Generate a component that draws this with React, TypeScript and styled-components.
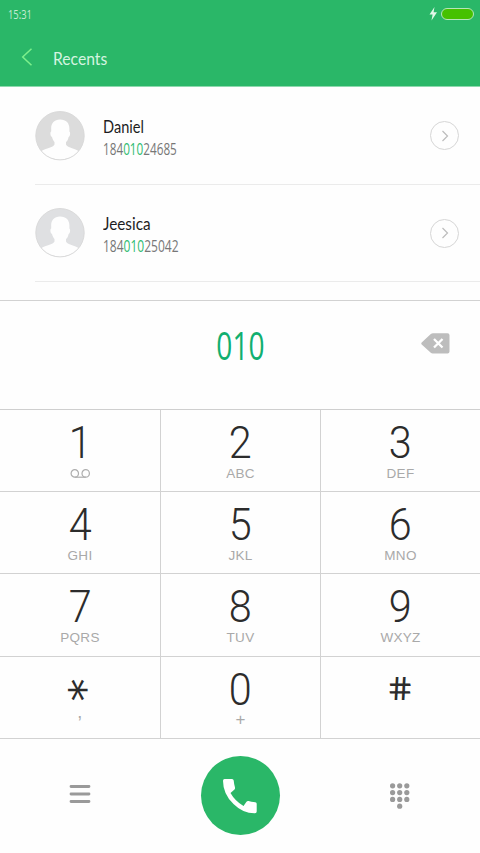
import React from "react";
import styled, { createGlobalStyle } from "styled-components";

const Global = createGlobalStyle`
  * { box-sizing: border-box; }
  html, body { margin: 0; padding: 0; background: #fff; }
  body { font-family: Lato, "Open Sans", sans-serif; overflow: hidden; }
  button { border: 0; padding: 0; margin: 0; background: none; font: inherit; color: inherit; }
  svg { display: block; }
`;

const Screen = styled.div`
  width: 480px;
  height: 853px;
  display: flex;
  flex-direction: column;
  background: #fefefe;
`;

const Header = styled.header`
  height: 87px;
  flex: none;
  background: #2ab768;
  border-bottom: 1px solid #8dd9ae;
`;

const StatusBar = styled.div`
  height: 28px;
  display: flex;
  align-items: center;
  justify-content: space-between;
  padding: 0 6px 0 8px;
`;

const Narrow = styled.span<{ $size: number; $x: number; $color: string; $weight?: number; $line: number; $origin?: string; $digits?: boolean }>`
  display: block;
  white-space: nowrap;
  font-family: ${(p) => (p.$digits ? '"Open Sans", sans-serif' : "Lato, sans-serif")};
  font-size: ${(p) => p.$size}px;
  line-height: ${(p) => p.$line}px;
  font-weight: ${(p) => p.$weight ?? 400};
  color: ${(p) => p.$color};
  transform: scaleX(${(p) => p.$x});
  transform-origin: ${(p) => p.$origin ?? "left"} center;
`;

const Battery = styled.div`
  display: flex;
  align-items: center;
  gap: 3px;
`;

const BatteryBody = styled.div`
  width: 33px;
  height: 12px;
  border: 1px solid #b5e5b8;
  border-radius: 6px;
  background: #46c100;
`;

const TitleBar = styled.div`
  display: flex;
  align-items: center;
  height: 58px;
  padding-left: 21px;
  gap: 20px;
`;

const TitleText = styled.div`
  padding-top: 2px;
`;

const List = styled.main`
  height: 214px;
  flex: none;
  border-bottom: 1px solid #d2d2d2;
`;

const Contact = styled.div<{ $height: number }>`
  height: ${(p) => p.$height}px;
  margin-left: 35px;
  padding-right: 21px;
  border-bottom: 1px solid #ebebeb;
  display: flex;
  align-items: center;
`;

const ContactText = styled.div`
  flex: 1;
  padding: 3px 0 0 18px;
`;

const Match = styled.span`
  color: #2dbb70;
`;

const Round = styled.button`
  width: 29px;
  height: 29px;
  border: 1px solid #d6d6d6;
  border-radius: 50%;
  display: flex;
  align-items: center;
  justify-content: center;
`;

const Display = styled.section`
  height: 108px;
  flex: none;
  display: grid;
  grid-template-columns: 160px 160px 160px;
  justify-items: center;
  padding-top: 20px;
`;

const Erase = styled.button`
  grid-column: 3;
  justify-self: end;
  align-self: start;
  margin: 12px 30px 0 0;
`;

const Typed = styled.div`
  grid-column: 2;
`;

const Pad = styled.section`
  flex: none;
  display: grid;
  grid-template-columns: 161px 160px 159px;
  grid-template-rows: 82px 82px 83px 82px;
  border-top: 1px solid #cfcfcf;
`;

const Key = styled.button`
  display: flex;
  flex-direction: column;
  align-items: center;
  border-bottom: 1px solid #d2d2d2;
  border-right: 1px solid #d2d2d2;
  &:nth-child(3n) { border-right: 0; }
`;

const Digit = styled.span`
  height: 54px;
  padding-top: 7px;
  font-family: Roboto, sans-serif;
  font-weight: 300;
  font-size: 44px;
  line-height: 52px;
  color: #2c2c2c;
  transform: scaleX(0.94);
`;

const Symbol = styled.span<{ $turn: string; $size: number }>`
  display: flex;
  align-items: center;
  justify-content: center;
  width: 52px;
  height: 52px;
  font-family: "DejaVu Sans", sans-serif;
  font-weight: 400;
  font-size: ${(p) => p.$size}px;
  line-height: 52px;
  transform: ${(p) => p.$turn};
`;

const Letters = styled.span<{ $size?: number; $lift?: number }>`
  height: 20px;
  font-family: "Liberation Sans", Arial, sans-serif;
  font-size: ${(p) => p.$size ?? 13.5}px;
  line-height: 20px;
  letter-spacing: 0.3px;
  color: #a9a9a9;
  display: flex;
  align-items: center;
  margin-top: ${(p) => -(p.$lift ?? 0)}px;
`;

const Actions = styled.footer`
  height: 114px;
  display: grid;
  grid-template-columns: 160px 160px 160px;
  align-items: start;
  justify-items: center;
`;

const MenuButton = styled.button`
  margin-top: 45px;
`;

const DialpadButton = styled.button`
  margin-top: 44px;
`;

const Call = styled.button`
  margin-top: 17px;
  width: 79px;
  height: 79px;
  padding-top: 2px;
  border-radius: 50%;
  background: #2ab768;
  display: flex;
  align-items: center;
  justify-content: center;
`;

const Avatar = ({ color, id }: { color: string; id: string }) => (
  <svg width="50" height="50" viewBox="0 0 50 50">
    <clipPath id={id}><circle cx="25" cy="24.7" r="24" /></clipPath>
    <circle cx="25" cy="24.7" r="24.3" fill="#fefefe" />
    <circle cx="25" cy="24.7" r="24.3" fill={color} />
    <path
      clipPath={`url(#${id})`}
      fill="#fefefe"
      d="M25 8.500C19 8.500 15.800 12.500 16.200 18V20.500C14.800 21 15.300 25.500 17 26C17.600 28.500 18.600 30 19.500 31V33.500C18.500 36.500 10 37.500 5.500 40.500L0 46V50H50V46L44.500 40.500C40 37.500 32 36.500 31 33.500V31C32.500 30 33 28.500 33.600 26C35.200 25.500 35.600 21 34.400 20.500V18C34.600 12.500 31.500 8.500 25 8.500Z"
    />
    <circle cx="25" cy="24.7" r="24.2" fill="none" stroke="#d8d8d8" strokeWidth="0.9" />
  </svg>
);

const Voicemail = () => (
  <svg width="20" height="10" viewBox="0 0 20 10" fill="none" stroke="#adadad" strokeWidth="1.2">
    <circle cx="4.800" cy="4.400" r="3.700" />
    <circle cx="15.700" cy="4.400" r="3.700" />
    <path d="M4.800 8.200H15.700" />
  </svg>
);

const contacts = [
  { name: "Daniel", scale: 0.81, before: "184", after: "24685", numScale: 0.757, color: "#dcdcdc", height: 98 },
  { name: "Jeesica", scale: 0.85, before: "184", after: "25042", numScale: 0.775, color: "#dfe0e2", height: 97 },
];

const keys: { d: React.ReactNode; l: React.ReactNode; size?: number; lift?: number }[] = [
  { d: "1", l: <Voicemail /> },
  { d: "2", l: "ABC" },
  { d: "3", l: "DEF" },
  { d: "4", l: "GHI" },
  { d: "5", l: "JKL" },
  { d: "6", l: "MNO" },
  { d: "7", l: "PQRS" },
  { d: "8", l: "TUV" },
  { d: "9", l: "WXYZ" },
  { d: <Symbol $size={46} $turn="translate(-9px, 0) rotate(90deg)">*</Symbol>, l: ",", size: 18, lift: 9 },
  { d: "0", l: "+", size: 17, lift: 1 },
  { d: <Symbol $size={32} $turn="translate(-1px, -1px) skewX(12deg) scaleX(1.08)">#</Symbol>, l: "" },
];

export default function App() {
  return (
    <>
      <Global />
      <Screen>
        <Header>
          <StatusBar>
            <Narrow $digits $size={13} $x={0.72} $color="#c5ebd3" $line={18}>15:31</Narrow>
            <Battery>
              <svg width="9" height="14" viewBox="0 0 9 14" fill="#e2f8e8"><path d="M5.500 0L0.500 7.500H3.600L2.500 13.500L8 5.300H4.600Z" /></svg>
              <BatteryBody />
            </Battery>
          </StatusBar>
          <TitleBar>
            <svg width="12" height="18" viewBox="0 0 12 18" fill="none" stroke="#7df08c" strokeWidth="1.5"><path d="M10.500 0.700L1.700 9L10.500 17.300" /></svg>
            <TitleText>
              <Narrow $size={18} $x={0.87} $color="#d5f4e0" $line={22}>Recents</Narrow>
            </TitleText>
          </TitleBar>
        </Header>
        <List>
          {contacts.map((c) => (
            <Contact key={c.name} $height={c.height}>
              <Avatar color={c.color} id={`clip-${c.name}`} />
              <ContactText>
                <Narrow $size={18} $x={c.scale} $color="#1d1d1d" $line={24}>{c.name}</Narrow>
                <Narrow $digits $size={15.5} $x={c.numScale} $color="#777" $line={23}>
                  {c.before}<Match>010</Match>{c.after}
                </Narrow>
              </ContactText>
              <Round aria-label="Details">
                <svg width="8" height="12" viewBox="0 0 8 12" fill="none" stroke="#bcbcbc" strokeWidth="1.2"><path d="M1.500 1L6.500 6L1.500 11" /></svg>
              </Round>
            </Contact>
          ))}
        </List>
        <Display>
          <Typed>
            <Narrow $digits $size={39} $x={0.72} $color="#11af70" $line={48} $origin="center">010</Narrow>
          </Typed>
          <Erase aria-label="Delete">
            <svg width="29" height="21" viewBox="0 0 29 21">
              <path fill="#bdbdbd" d="M0.700 9.500L9.500 1.200Q10.800 0.300 12 0.300H26.500Q28.500 0.300 28.500 2.300V18.500Q28.500 20.500 26.500 20.500H12Q10.500 20.500 9.500 19.500L0.700 11.500Q-0.200 10.500 0.700 9.500Z" />
              <path d="M13 6L21.500 14.500M21.500 6L13 14.500" stroke="#fff" strokeWidth="2.300" />
            </svg>
          </Erase>
        </Display>
        <Pad>
          {keys.map((k, i) => (
            <Key key={i}>
              <Digit>{k.d}</Digit>
              <Letters $size={k.size} $lift={k.lift}>{k.l}</Letters>
            </Key>
          ))}
        </Pad>
        <Actions>
          <MenuButton aria-label="Menu">
            <svg width="22" height="20" viewBox="0 0 22 20" stroke="#9a9a9a" strokeWidth="2.800" strokeLinecap="round"><path d="M2 2.500H20M2 10H20M2 17.500H20" /></svg>
          </MenuButton>
          <Call aria-label="Call">
            <svg width="34" height="35" viewBox="0 0 34 35" fill="#fff">
              <path d="M1.500 0H9Q10.500 0 10.700 1.500Q11 5 12 8.500Q12.300 9.700 11.500 10.500L7.500 14Q12 22 20.500 27L23.500 22.700Q24.300 21.700 25.500 22Q28 23 32.300 23.200Q33.700 23.300 33.700 24.700V32.500Q33.700 34.300 32 34.300Q20 34.500 10.500 25Q0 15 0 1.700Q0 0 1.500 0Z" />
            </svg>
          </Call>
          <DialpadButton aria-label="Dialpad">
            <svg width="20" height="26" viewBox="0 0 20 26" fill="#9a9a9a">
              {[0, 1, 2].map((r) => [0, 1, 2].map((c) => <circle key={`${r}${c}`} cx={2.6 + c * 7.1} cy={2.8 + r * 6.8} r="2.600" />))}
              <circle cx="9.700" cy="23.200" r="2.600" />
            </svg>
          </DialpadButton>
        </Actions>
      </Screen>
    </>
  );
}
